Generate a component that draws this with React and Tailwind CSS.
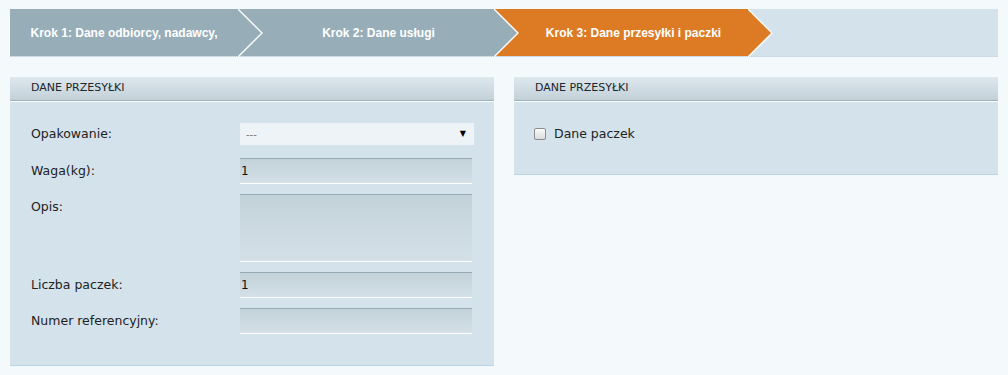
import React from "react";

const steps = [
  { label: "Krok 1: Dane odbiorcy, nadawcy,", w: "w-[228px]", pad: "pl-0", bg: "bg-[#97adb8]", fill: "#97adb8" },
  { label: "Krok 2: Dane usługi", w: "w-[256px]", pad: "pl-[25px]", bg: "bg-[#97adb8]", fill: "#97adb8" },
  { label: "Krok 3: Dane przesyłki i paczki", w: "w-[254px]", pad: "pl-[25px]", bg: "bg-[#dd7b25]", fill: "#dd7b25" }
];

function Step({ step }) {
  return (
    <div className={`relative h-full flex items-center justify-center ${step.w} ${step.pad} ${step.bg}`}>
      <span className="text-[12px] font-bold text-white">{step.label}</span>
      <svg className="absolute left-full top-0 z-10" width="26" height="48" viewBox="0 0 26 48">
        <polygon points="0,0 24,24 0,48" fill={step.fill} />
        <polyline points="0,0 24,24 0,48" fill="none" stroke="#ffffff" strokeWidth="1.3" />
      </svg>
    </div>
  );
}

function PanelHeader({ title }) {
  return (
    <div className="h-[24px] flex items-center pl-[21px] bg-gradient-to-b from-[#dde7ee] to-[#c3d1d9] border-b border-[#9db2bf] shadow-[0_1px_0_#ffffff]">
      <span className="text-[11px] text-[#1d262b] uppercase">{title}</span>
    </div>
  );
}

function TextField({ value, tall }) {
  return (
    <div
      className={`w-[232px] ${tall ? "h-[68px]" : "h-[26px]"} border-t border-[#97acb8] border-b border-b-white bg-gradient-to-b from-[#c3d1d8] to-[#d3e0e7] flex ${tall ? "items-start" : "items-center"} px-[1px]`}
    >
      <span className="text-[12px] text-[#111]">{value}</span>
    </div>
  );
}

function Row({ label, children, mb = "mb-[10px]" }) {
  return (
    <div className={`flex items-start ${mb}`}>
      <div className="w-[209px] leading-[26px] text-[12.5px] text-[#222]">{label}</div>
      {children}
    </div>
  );
}

export default function App() {
  return (
    <div className="min-h-[375px] bg-[#f4f9fc] px-[10px] pt-[9px] font-['DejaVu_Sans',sans-serif]">
      <div className="flex h-[48px] bg-[#d4e2eb] border-b border-dotted border-[#c2d3de] font-['Liberation_Sans',sans-serif]">
        {steps.map((s) => (
          <Step key={s.label} step={s} />
        ))}
      </div>

      <div className="mt-[20px] grid grid-cols-[484px_484px] gap-[20px] items-start">
        <div className="bg-[#d4e2eb] border-b border-[#b9d4e4]">
          <PanelHeader title="Dane przesyłki" />
          <div className="pl-[21px] pt-[22px] pb-[31px]">
            <div className="flex items-center mb-[13px]">
              <div className="w-[209px] text-[12.5px] text-[#222]">Opakowanie:</div>
              <div className="w-[234px] h-[22px] bg-[#eef3f7] flex items-center justify-between pl-[6px] pr-[8px]">
                <span className="text-[10px] text-[#777]">---</span>
                <span className="text-[8px] text-black">▼</span>
              </div>
            </div>
            <Row label="Waga(kg):">
              <TextField value="1" />
            </Row>
            <Row label="Opis:">
              <TextField value="" tall />
            </Row>
            <Row label="Liczba paczek:">
              <TextField value="1" />
            </Row>
            <Row label="Numer referencyjny:" mb="mb-0">
              <TextField value="" />
            </Row>
          </div>
        </div>

        <div className="bg-[#d4e2eb] border-b border-[#b9d4e4]">
          <PanelHeader title="Dane przesyłki" />
          <div className="pl-[20px] pt-[22px] pb-[29px]">
            <label className="flex items-center h-[22px] gap-[8px]">
              <span className="w-[12px] h-[12px] rounded-[2px] border border-[#8e8e8e] bg-gradient-to-b from-[#fafafa] to-[#dcdcdc]" />
              <span className="text-[12.5px] text-[#222]">Dane paczek</span>
            </label>
          </div>
        </div>
      </div>
    </div>
  );
}
